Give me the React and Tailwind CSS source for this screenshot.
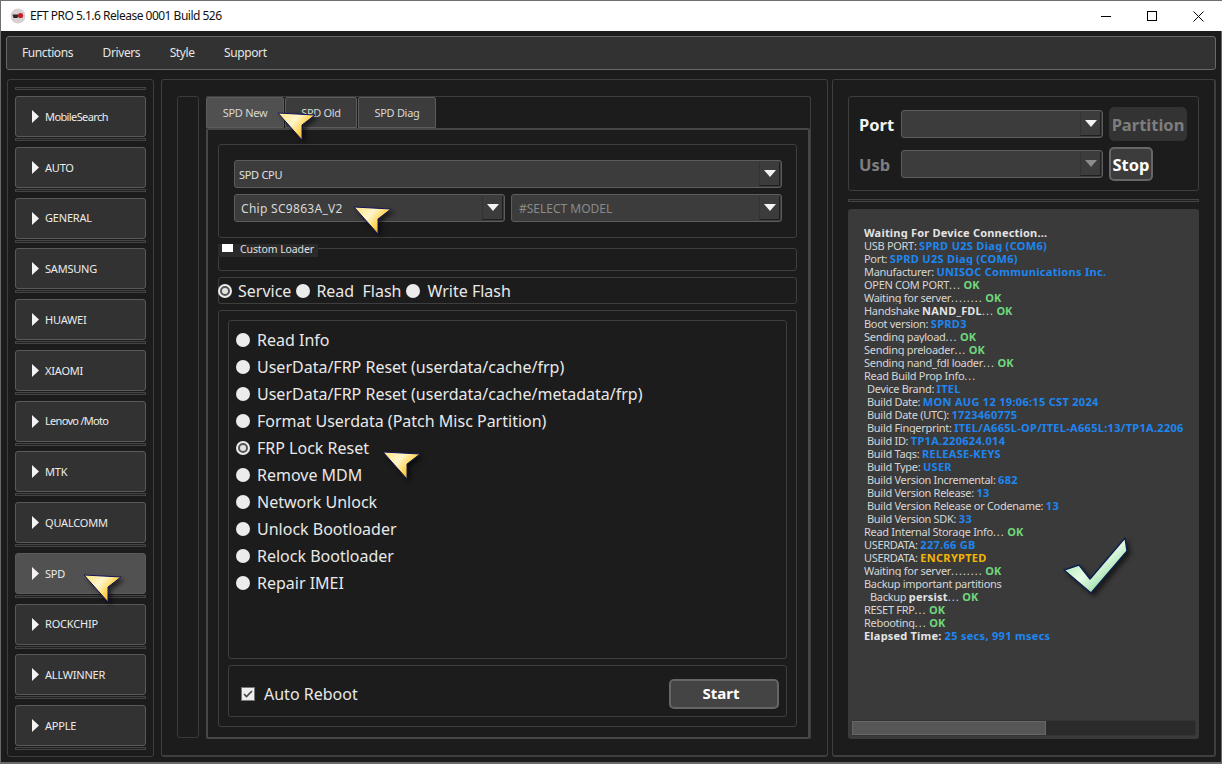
const sideItems = [
  ["MobileSearch", "tracking-[-0.6px]"],
  ["AUTO", "tracking-[-0.2px]"],
  ["GENERAL", "tracking-[-0.2px]"],
  ["SAMSUNG", "tracking-[-0.2px]"],
  ["HUAWEI", "tracking-[-0.2px]"],
  ["XIAOMI", "tracking-[-0.2px]"],
  ["Lenovo /Moto", "tracking-[-0.7px]"],
  ["MTK", "tracking-[-0.2px]"],
  ["QUALCOMM", "tracking-[-0.2px]"],
  ["SPD", "tracking-[-0.2px]"],
  ["ROCKCHIP", "tracking-[-0.2px]"],
  ["ALLWINNER", "tracking-[-0.2px]"],
  ["APPLE", "tracking-[-0.2px]"],
];

const services = [
  "Read Info",
  "UserData/FRP Reset (userdata/cache/frp)",
  "UserData/FRP Reset (userdata/cache/metadata/frp)",
  "Format Userdata (Patch Misc Partition)",
  "FRP Lock Reset",
  "Remove MDM",
  "Network Unlock",
  "Unlock Bootloader",
  "Relock Bootloader",
  "Repair IMEI",
];

// t: plain, b: bold light, v: blue value, k: green, y: yellow
const logLines = [
  { parts: [["b", "Waiting For Device Connection..."]] },
  { parts: [["t", "USB PORT: "], ["v", "SPRD U2S Diag (COM6)"]] },
  { parts: [["t", "Port: "], ["v", "SPRD U2S Diag (COM6)"]] },
  { parts: [["t", "Manufacturer: "], ["v", "UNISOC Communications Inc."]] },
  { parts: [["t", "OPEN COM PORT... "], ["k", "OK"]] },
  { parts: [["t", "Waiting for server........ "], ["k", "OK"]] },
  { parts: [["t", "Handshake "], ["b", "NAND_FDL"], ["t", "... "], ["k", "OK"]] },
  { parts: [["t", "Boot version: "], ["v", "SPRD3"]] },
  { parts: [["t", "Sending payload... "], ["k", "OK"]] },
  { parts: [["t", "Sending preloader... "], ["k", "OK"]] },
  { parts: [["t", "Sending nand_fdl loader... "], ["k", "OK"]] },
  { parts: [["t", "Read Build Prop Info..."]] },
  { indent: 1, parts: [["t", "Device Brand: "], ["v", "ITEL"]] },
  { indent: 1, parts: [["t", "Build Date: "], ["v", "MON AUG 12 19:06:15 CST 2024"]] },
  { indent: 1, parts: [["t", "Build Date (UTC): "], ["v", "1723460775"]] },
  { indent: 1, parts: [["t", "Build Fingerprint: "], ["v", "ITEL/A665L-OP/ITEL-A665L:13/TP1A.2206"]] },
  { indent: 1, parts: [["t", "Build ID: "], ["v", "TP1A.220624.014"]] },
  { indent: 1, parts: [["t", "Build Tags: "], ["v", "RELEASE-KEYS"]] },
  { indent: 1, parts: [["t", "Build Type: "], ["v", "USER"]] },
  { indent: 1, parts: [["t", "Build Version Incremental: "], ["v", "682"]] },
  { indent: 1, parts: [["t", "Build Version Release: "], ["v", "13"]] },
  { indent: 1, parts: [["t", "Build Version Release or Codename: "], ["v", "13"]] },
  { indent: 1, parts: [["t", "Build Version SDK: "], ["v", "33"]] },
  { parts: [["t", "Read Internal Storage Info... "], ["k", "OK"]] },
  { parts: [["t", "USERDATA: "], ["v", "227.66 GB"]] },
  { parts: [["t", "USERDATA: "], ["y", "ENCRYPTED"]] },
  { parts: [["t", "Waiting for server........ "], ["k", "OK"]] },
  { parts: [["t", "Backup important partitions"]] },
  { indent: 2, parts: [["t", "Backup "], ["b", "persist"], ["t", "... "], ["k", "OK"]] },
  { parts: [["t", "RESET FRP... "], ["k", "OK"]] },
  { parts: [["t", "Rebooting... "], ["k", "OK"]] },
  { parts: [["b", "Elapsed Time: "], ["v", "25 secs, 991 msecs"]] },
];

const partClass = {
  t: "tracking-[-0.3px] text-[#d6d6d6]",
  b: "font-bold tracking-[0.2px] text-[#e4e4e4]",
  v: "font-bold tracking-[0.3px] text-[#1e86f0]",
  k: "font-bold text-[#6fd67c]",
  y: "font-bold tracking-[0.3px] text-[#f2b705]",
};

// the dots in the log run wider than the letters around them
const LogPart = ({ kind, text }) => {
  if (kind !== "t") return <span className={partClass[kind]}>{text}</span>;
  return text.split(/(\.{3,})/).map((piece, i) => (
    <span key={i} className={i % 2 ? "tracking-[1px] text-[#d6d6d6]" : partClass.t}>{piece}</span>
  ));
};

const Radio = ({ checked }) => (
  <span className="flex h-[14px] w-[14px] shrink-0 items-center justify-center rounded-full bg-[#ececec]">
    {checked && (
      <span className="h-[10px] w-[10px] rounded-full border-2 border-[#555] bg-[#e4e4e4]" />
    )}
  </span>
);

const Combo = ({ text, disabled, className = "", textClass = "text-[#d8d8d8]" }) => (
  <div className={`flex items-stretch rounded-[3px] border border-[#5c5c5c] bg-[#3c3c3c] ${className}`}>
    <span className={`flex-1 truncate ${textClass}`}>{text}</span>
    <span className="my-[1px] mr-[1px] flex w-[21px] items-center justify-center border-r border-b border-l border-[#1f1f1f] border-l-[#333]">
      <svg width="12" height="7" viewBox="0 0 12 7">
        <path d="M0 0h12L6 7z" fill={disabled ? "#8c8c8c" : "#f4f4f4"} />
      </svg>
    </span>
  </div>
);

const Pointer = ({ className }) => (
  <svg
    className={`absolute drop-shadow-[3px_3px_2px_rgba(0,0,0,0.55)] ${className}`}
    width="40"
    height="30"
    viewBox="0 0 40 30"
  >
    <defs>
      <linearGradient id="pointerFill" x1="0" y1="0" x2="1" y2="0.6">
        <stop offset="0" stopColor="#ffe27a" />
        <stop offset="0.45" stopColor="#fff6cc" />
        <stop offset="0.75" stopColor="#ffd24a" />
        <stop offset="1" stopColor="#d9a441" />
      </linearGradient>
    </defs>
    <path d="M1 1L38 3L25 13L25 28Z" fill="url(#pointerFill)" stroke="#14145a" strokeWidth="1" strokeLinejoin="round" />
  </svg>
);

const CheckMark = () => (
  <svg
    className="absolute left-[1063px] top-[537px] drop-shadow-[3px_3px_2px_rgba(0,0,0,0.55)]"
    width="66"
    height="58"
    viewBox="0 0 66 58"
  >
    <defs>
      <linearGradient id="checkFill" x1="0" y1="0" x2="1" y2="1">
        <stop offset="0" stopColor="#7fdc90" />
        <stop offset="0.5" stopColor="#e6fbe4" />
        <stop offset="1" stopColor="#4fbf6f" />
      </linearGradient>
    </defs>
    <path
      d="M1 33L16 28L27 42L62 1L64 14L28 56Z"
      fill="url(#checkFill)"
      stroke="#0c1f4f"
      strokeWidth="1.4"
      strokeLinejoin="round"
    />
  </svg>
);

export default function App() {
  return (
    <div className="relative flex h-[764px] w-[1222px] flex-col overflow-hidden bg-[#1c1c1c] font-['Noto_Sans',sans-serif]">
      {/* title bar */}
      <div className="flex h-[31px] shrink-0 items-center border-t border-l border-[#707070] bg-white pl-[9px]">
        <svg width="16" height="16" viewBox="0 0 16 16">
          <circle cx="8" cy="8" r="7.5" fill="#d9d0d0" />
          <path d="M2.5 6.5h6l-1 3.5h-4z" fill="#2a2a2a" />
          <circle cx="10.5" cy="7.5" r="2.6" fill="#c5202b" />
        </svg>
        <span className="ml-[4px] text-[12px] tracking-[-0.5px] text-[#111]">EFT PRO 5.1.6 Release 0001 Build 526</span>
        <div className="ml-auto mr-[1px] flex h-full items-center">
          <span className="flex w-[46px] justify-center">
            <span className="h-[1px] w-[10px] bg-black" />
          </span>
          <span className="flex w-[46px] justify-center">
            <span className="h-[10px] w-[10px] border border-black" />
          </span>
          <span className="flex w-[46px] justify-center">
            <svg width="11" height="11" viewBox="0 0 11 11">
              <path d="M0.5 0.5L10.5 10.5M10.5 0.5L0.5 10.5" stroke="#000" strokeWidth="1" />
            </svg>
          </span>
        </div>
      </div>

      {/* window body */}
      <div className="flex min-h-0 flex-1 flex-col border-x border-b-2 border-[#6a6a6a] pb-[5px]">
        <div className="mx-[5px] mt-[5px] flex h-[34px] shrink-0 items-center gap-[29.5px] rounded-[3px] border border-[#686868] bg-[#323232] pl-[15px] text-[12px] tracking-[-0.4px] text-[#e6e6e6]">
          <span>Functions</span>
          <span>Drivers</span>
          <span>Style</span>
          <span>Support</span>
        </div>

        <div className="mt-[9px] flex min-h-0 flex-1 pl-[6px] pr-[5px]">
          {/* device list */}
          <div className="flex w-[147px] shrink-0 flex-col rounded-[3px] border border-[#3e3e3e] px-[7px] pt-[7px] pb-[6px]">
            <div className="h-[3px] border border-[#444] bg-[#222]" />
            <div className="mt-[6px] flex flex-1 flex-col justify-between">
              {sideItems.map(([item, spacing]) => (
                <div key={item}>
                  <div
                    className={`flex h-[41px] items-center rounded-[3px] border border-[#5a5a5a] pl-[16px] text-[11px] text-[#ececec] ${
                      item === "SPD" ? "bg-[#515151]" : "bg-[#323232]"
                    }`}
                  >
                    <svg width="7" height="13" viewBox="0 0 7 13">
                      <path d="M0 0L7 6.5L0 13z" fill="#f4f4f4" />
                    </svg>
                    <span className={`ml-[6px] pt-[1px] ${spacing}`}>{item}</span>
                  </div>
                  <div className="mt-[1px] h-[3px] border border-[#444] bg-[#222]" />
                </div>
              ))}
            </div>
          </div>

          {/* center panel */}
          <div className="ml-[7px] flex w-[667px] shrink-0 rounded-[3px] border-t border-r border-b-2 border-l border-[#3e3e3e] py-[16px] pl-[15px]">
            <div className="mb-[1px] w-[22px] shrink-0 rounded-[3px] border border-[#3a3a3a]" />
            <div className="ml-[7px] flex w-[605px] flex-col rounded-tr-[3px] border-t border-r border-[#3e3e3e]">
              <div className="flex h-[31px] shrink-0 text-[11px] tracking-[-0.3px] text-[#d8d8d8]">
                <div className="flex w-[78px] items-center justify-center rounded-t-[2px] border border-[#5c5c5c] bg-[#505050] pt-[1px]">SPD New</div>
                <div className="ml-[1px] flex w-[72px] items-center justify-center rounded-t-[2px] border border-[#5c5c5c] bg-[#3c3c3c] pt-[1px]">SPD Old</div>
                <div className="ml-[1px] flex w-[78px] items-center justify-center rounded-t-[2px] border border-[#5c5c5c] bg-[#3c3c3c] pt-[1px]">SPD Diag</div>
              </div>
              <div className="flex flex-1 flex-col rounded-[2px] border-2 border-[#474747] pt-[14px] pr-[11px] pb-[10px] pl-[10px]">
                <div className="flex h-[94px] shrink-0 flex-col gap-[6px] rounded-[3px] border border-[#3e3e3e] pt-[15px] pr-[14px] pl-[15px]">
                  <Combo text="SPD CPU" className="h-[28px] text-[11px] leading-[28px] tracking-[-0.3px]" textClass="pl-[4px] text-[#e0e0e0]" />
                  <div className="flex gap-[6px]">
                    <Combo text="Chip SC9863A_V2" className="h-[28px] w-[271px] text-[12px] leading-[28px] tracking-[0.3px]" textClass="pl-[6px] text-[#d8d8d8]" />
                    <Combo text="#SELECT MODEL" className="h-[28px] flex-1 text-[12px] leading-[28px]" textClass="pl-[7px] text-[#8a8a8a]" />
                  </div>
                </div>

                <div className="relative mt-[10px] h-[23px] shrink-0 rounded-[3px] border border-[#3e3e3e]">
                  <div className="absolute -top-[5px] -left-[1px] flex h-[13px] w-[100px] items-start bg-[#2a2a2a] pl-[4px] text-[10.5px] leading-[11px] tracking-[-0.1px] text-[#e0e0e0]">
                    <span className="h-[8px] w-[11px] bg-white" />
                    <span className="ml-[7px]">Custom Loader</span>
                  </div>
                </div>

                <div className="mt-[6px] flex h-[27px] shrink-0 items-center rounded-[3px] border border-[#3e3e3e] text-[16px] leading-[22px] text-[#e8e8e8]">
                  <span className="-ml-[1px]"><Radio checked /></span>
                  <span className="ml-[6px]">Service</span>
                  <span className="ml-[5px]"><Radio /></span>
                  <span className="ml-[6px] whitespace-pre">Read  Flash</span>
                  <span className="ml-[5px]"><Radio /></span>
                  <span className="ml-[7px]">Write Flash</span>
                </div>

                <div className="mt-[6px] flex flex-1 flex-col rounded-[3px] border border-[#3e3e3e] p-[9px]">
                  <div className="flex flex-1 flex-col rounded-[3px] border border-[#3e3e3e] pt-[5px] pl-[7px]">
                    {services.map((item) => (
                      <div key={item} className="flex h-[27px] items-center text-[16px] text-[#e8e8e8]">
                        <Radio checked={item === "FRP Lock Reset"} />
                        <span className="ml-[7px]">{item}</span>
                      </div>
                    ))}
                  </div>
                  <div className="mt-[6px] flex h-[52px] shrink-0 items-center rounded-[3px] border border-[#3e3e3e] pt-[5px] pr-[7px] pl-[12px]">
                    <span className="flex h-[14px] w-[14px] items-center justify-center border border-[#777] bg-[#eeeeee]">
                      <svg width="10" height="8" viewBox="0 0 10 8">
                        <path d="M1 4L3.5 6.5L9 1" fill="none" stroke="#444" strokeWidth="1.6" />
                      </svg>
                    </span>
                    <span className="ml-[9px] text-[16px] text-[#e8e8e8]">Auto Reboot</span>
                    <div className="ml-auto flex h-[30px] w-[110px] items-center justify-center rounded-[5px] border-2 border-[#666] bg-[#444] pr-[6px] text-[15px] font-bold text-white">
                      Start
                    </div>
                  </div>
                </div>
              </div>
            </div>
          </div>

          {/* port and log panel */}
          <div className="ml-[4px] flex min-w-0 flex-1 flex-col rounded-[3px] border-t border-r-2 border-b-2 border-l border-[#3e3e3e] px-[15px] py-[16px]">
            <div className="flex h-[95px] shrink-0 rounded-[3px] border border-[#3e3e3e] pt-[10px] pl-[10px]">
              <div className="flex w-[42px] flex-col text-[16.5px] font-bold">
                <span className="mt-[4px] leading-[28px] text-[#f2f2f2]">Port</span>
                <span className="mt-[12px] leading-[28px] text-[#7e7e7e]">Usb</span>
              </div>
              <div className="flex w-[202px] flex-col gap-[12px] pt-[3px]">
                <Combo className="h-[28px]" />
                <Combo className="h-[28px]" disabled />
              </div>
              <div className="ml-[6px] flex flex-col items-start gap-[6px] text-[16.5px] font-bold">
                <div className="flex h-[34px] w-[78px] items-center justify-center rounded-[5px] bg-[#333] pt-[3px] text-[#7e7e7e]">Partition</div>
                <div className="flex h-[34px] w-[44px] items-center justify-center rounded-[5px] border-2 border-[#666] bg-[#3c3c3c] pt-[3px] text-white">Stop</div>
              </div>
            </div>
            <div className="mt-[8px] h-[3px] shrink-0 border border-[#444] bg-[#222]" />
            <div className="mt-[7px] flex min-h-0 flex-1 flex-col rounded-[3px] bg-[#3a3a3a]">
              <div className="min-h-0 flex-1 overflow-hidden pt-[17px] pr-[13px] pl-[16px] text-[11px] leading-[13px]">
                {logLines.map((line, i) => (
                  <div
                    key={i}
                    className={`overflow-hidden whitespace-pre ${
                      line.indent === 1 ? "pl-[3px]" : line.indent === 2 ? "pl-[6px]" : ""
                    }`}
                  >
                    {line.parts.map(([kind, text], j) => (
                      <LogPart key={j} kind={kind} text={text} />
                    ))}
                  </div>
                ))}
              </div>
              <div className="mx-[3px] mb-[3px] h-[16px] shrink-0 rounded-[3px] border border-[#333] bg-[#2b2b2b]">
                <div className="h-full w-[194px] border border-[#666] bg-[#565656]" />
              </div>
            </div>
          </div>
        </div>
      </div>

      {/* callouts laid over the screenshot */}
      <Pointer className="left-[277px] top-[112px]" />
      <Pointer className="left-[353px] top-[206px]" />
      <Pointer className="left-[382px] top-[451px]" />
      <Pointer className="left-[83px] top-[574px]" />
      <CheckMark />
    </div>
  );
}
